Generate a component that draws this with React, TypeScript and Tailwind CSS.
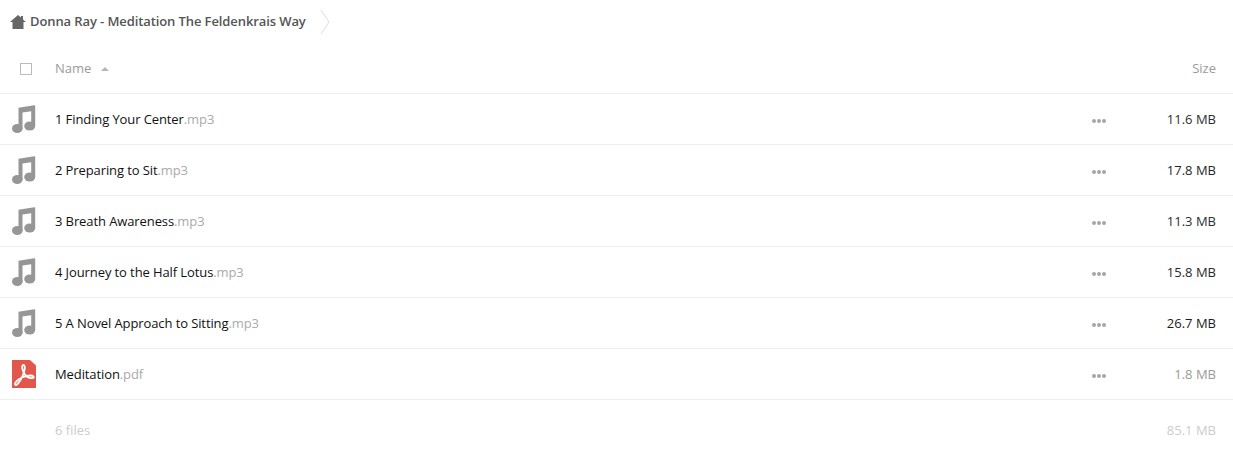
const rows = [
  { name: "1 Finding Your Center", ext: ".mp3", size: "11.6 MB", c: "text-[#2e2e2e]" },
  { name: "2 Preparing to Sit", ext: ".mp3", size: "17.8 MB", c: "text-[#262626]" },
  { name: "3 Breath Awareness", ext: ".mp3", size: "11.3 MB", c: "text-[#2e2e2e]" },
  { name: "4 Journey to the Half Lotus", ext: ".mp3", size: "15.8 MB", c: "text-[#282828]" },
  { name: "5 A Novel Approach to Sitting", ext: ".mp3", size: "26.7 MB", c: "text-[#1c1c1c]" },
  { name: "Meditation", ext: ".pdf", size: "1.8 MB", c: "text-[#9a9a9a]" },
];

function Music() {
  return (
    <svg width="24" height="28" viewBox="0 0 24 28" className="block">
      <path fill="#969696" d="M6.5 2.8 L22.3 0.2 Q23.2 0.1 23.2 1 V21 H19.2 V6.2 L10.5 7.6 V24 H6.5 Z" />
      <ellipse cx="5.3" cy="23.5" rx="5.3" ry="4.5" fill="#969696" />
      <ellipse cx="17.7" cy="21" rx="5.5" ry="4.5" fill="#969696" />
    </svg>
  );
}

function Pdf() {
  return (
    <svg width="24" height="28" viewBox="0 0 24 28" className="block">
      <path fill="#e2574c" d="M0 0 H18 L24 5.5 V28 H0 Z" />
      <path
        fill="none"
        stroke="#ffffff"
        strokeWidth="1.8"
        strokeLinejoin="round"
        d="M11 5 C9.5 5.5 10 9.5 12 13 C14 16.5 17.5 18.8 21 18 C22.5 17.3 21.5 15.5 18.5 15.5 C14 15.5 7 18 3.8 22 C1.8 25 3.5 26 5.5 24 C8.5 21 12.3 14 12.8 8.5 C13 6 12 4.8 11 5 Z"
      />
    </svg>
  );
}

function Row({ r, icon }: { r: (typeof rows)[number]; icon: React.ReactNode }) {
  return (
    <div className="flex h-[51px] items-center border-b border-[#eeeeee]">
      <div className="flex w-[55px] shrink-0 justify-start pl-[12px]">{icon}</div>
      <div className="flex-1 text-[13px] leading-[18px] tracking-[-0.1px] text-[#111111]">
        {r.name}
        <span className="text-[#aaaaaa]">{r.ext}</span>
      </div>
      <div className="mr-[60px] flex gap-[1px] pt-[3px]">
        <span className="h-[4px] w-[4px] rounded-full bg-[#a6a6a6]" />
        <span className="h-[4px] w-[4px] rounded-full bg-[#a6a6a6]" />
        <span className="h-[4px] w-[4px] rounded-full bg-[#a6a6a6]" />
      </div>
      <div className={`w-[67px] pr-[17px] pt-[1px] text-right text-[13px] whitespace-nowrap ${r.c}`}>{r.size}</div>
    </div>
  );
}

export default function App() {
  return (
    <div className="h-[466px] w-[1233px] overflow-hidden bg-white font-['Open_Sans',sans-serif] text-[13px]">
      <div className="flex h-[44px] items-center pl-[10px]">
        <svg width="16" height="14" viewBox="0 0 16 14" className="mt-[-1px] block">
          <path fill="#666666" d="M0 7 L8 0 L11 2.6 V1 H13 V4.4 L16 7 H13.5 V14 H2.5 V7 Z" />
        </svg>
        <span className="ml-[4px] font-semibold tracking-[-0.1px] text-[#555555]">Donna Ray - Meditation The Feldenkrais Way</span>
        <svg width="10" height="26" viewBox="0 0 10 26" className="ml-[14px] block">
          <path d="M1 1 L9 13 L1 25" fill="none" stroke="#dddddd" strokeWidth="1" />
        </svg>
      </div>
      <div className="flex h-[50px] items-center border-b border-[#eeeeee]">
        <div className="w-[55px] shrink-0 pl-[20px]">
          <div className="h-[12px] w-[12px] border border-[#bbbbbb]" />
        </div>
        <span className="text-[#a09a98]">Name</span>
        <svg width="8" height="4" viewBox="0 0 8 4" className="ml-[10px] block">
          <path d="M0 4 L4 0 L8 4 Z" fill="#b5b5b5" />
        </svg>
        <span className="ml-auto pr-[17px] text-[#a09a98]">Size</span>
      </div>
      {rows.map((r, i) => (
        <Row key={r.name} r={r} icon={i < 5 ? <Music /> : <Pdf />} />
      ))}
      <div className="flex h-[62px] items-center justify-between pl-[55px] pr-[17px] text-[#cccccc]">
        <span>6 files</span>
        <span>85.1 MB</span>
      </div>
    </div>
  );
}
